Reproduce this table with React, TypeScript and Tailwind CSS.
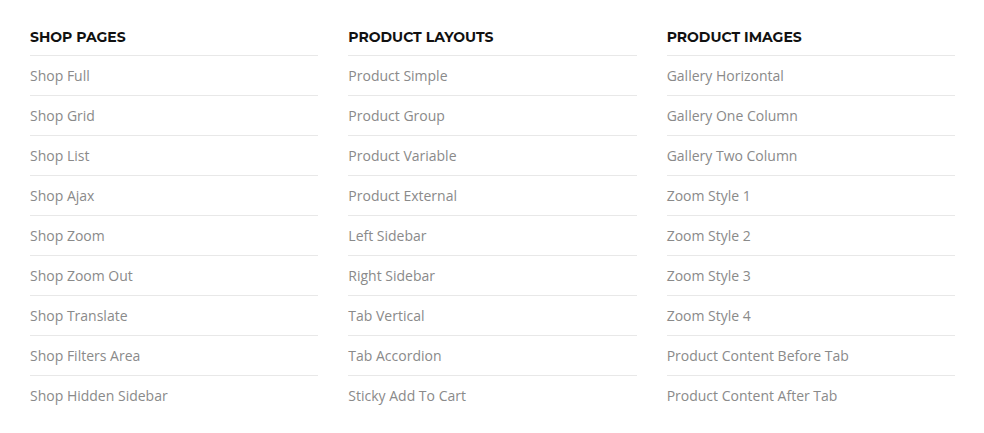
const columns: { title: string; items: string[] }[] = [
  {
    title: "Shop Pages",
    items: [
      "Shop Full",
      "Shop Grid",
      "Shop List",
      "Shop Ajax",
      "Shop Zoom",
      "Shop Zoom Out",
      "Shop Translate",
      "Shop Filters Area",
      "Shop Hidden Sidebar",
    ],
  },
  {
    title: "Product Layouts",
    items: [
      "Product Simple",
      "Product Group",
      "Product Variable",
      "Product External",
      "Left Sidebar",
      "Right Sidebar",
      "Tab Vertical",
      "Tab Accordion",
      "Sticky Add To Cart",
    ],
  },
  {
    title: "Product Images",
    items: [
      "Gallery Horizontal",
      "Gallery One Column",
      "Gallery Two Column",
      "Zoom Style 1",
      "Zoom Style 2",
      "Zoom Style 3",
      "Zoom Style 4",
      "Product Content Before Tab",
      "Product Content After Tab",
    ],
  },
];

export default function App() {
  return (
    <div className="w-[984px] h-[433px] bg-white overflow-hidden">
      <div className="ml-[30px] w-[925px] grid grid-cols-3 gap-x-[30px] pt-[27px]">
        {columns.map((col) => (
          <div key={col.title}>
            {/* heading */}
            <h3 className="h-5 leading-5 mb-2 text-[14px] font-bold uppercase text-[#111] font-['Montserrat','Inter',sans-serif]">
              {col.title}
            </h3>
            <ul>
              {col.items.map((item) => (
                <li
                  key={item}
                  className="h-10 border-t border-[#e8e8e8] flex items-center text-[14px] text-[#8a8a8a] font-['Open_Sans',sans-serif]"
                >
                  {item}
                </li>
              ))}
            </ul>
          </div>
        ))}
      </div>
    </div>
  );
}
